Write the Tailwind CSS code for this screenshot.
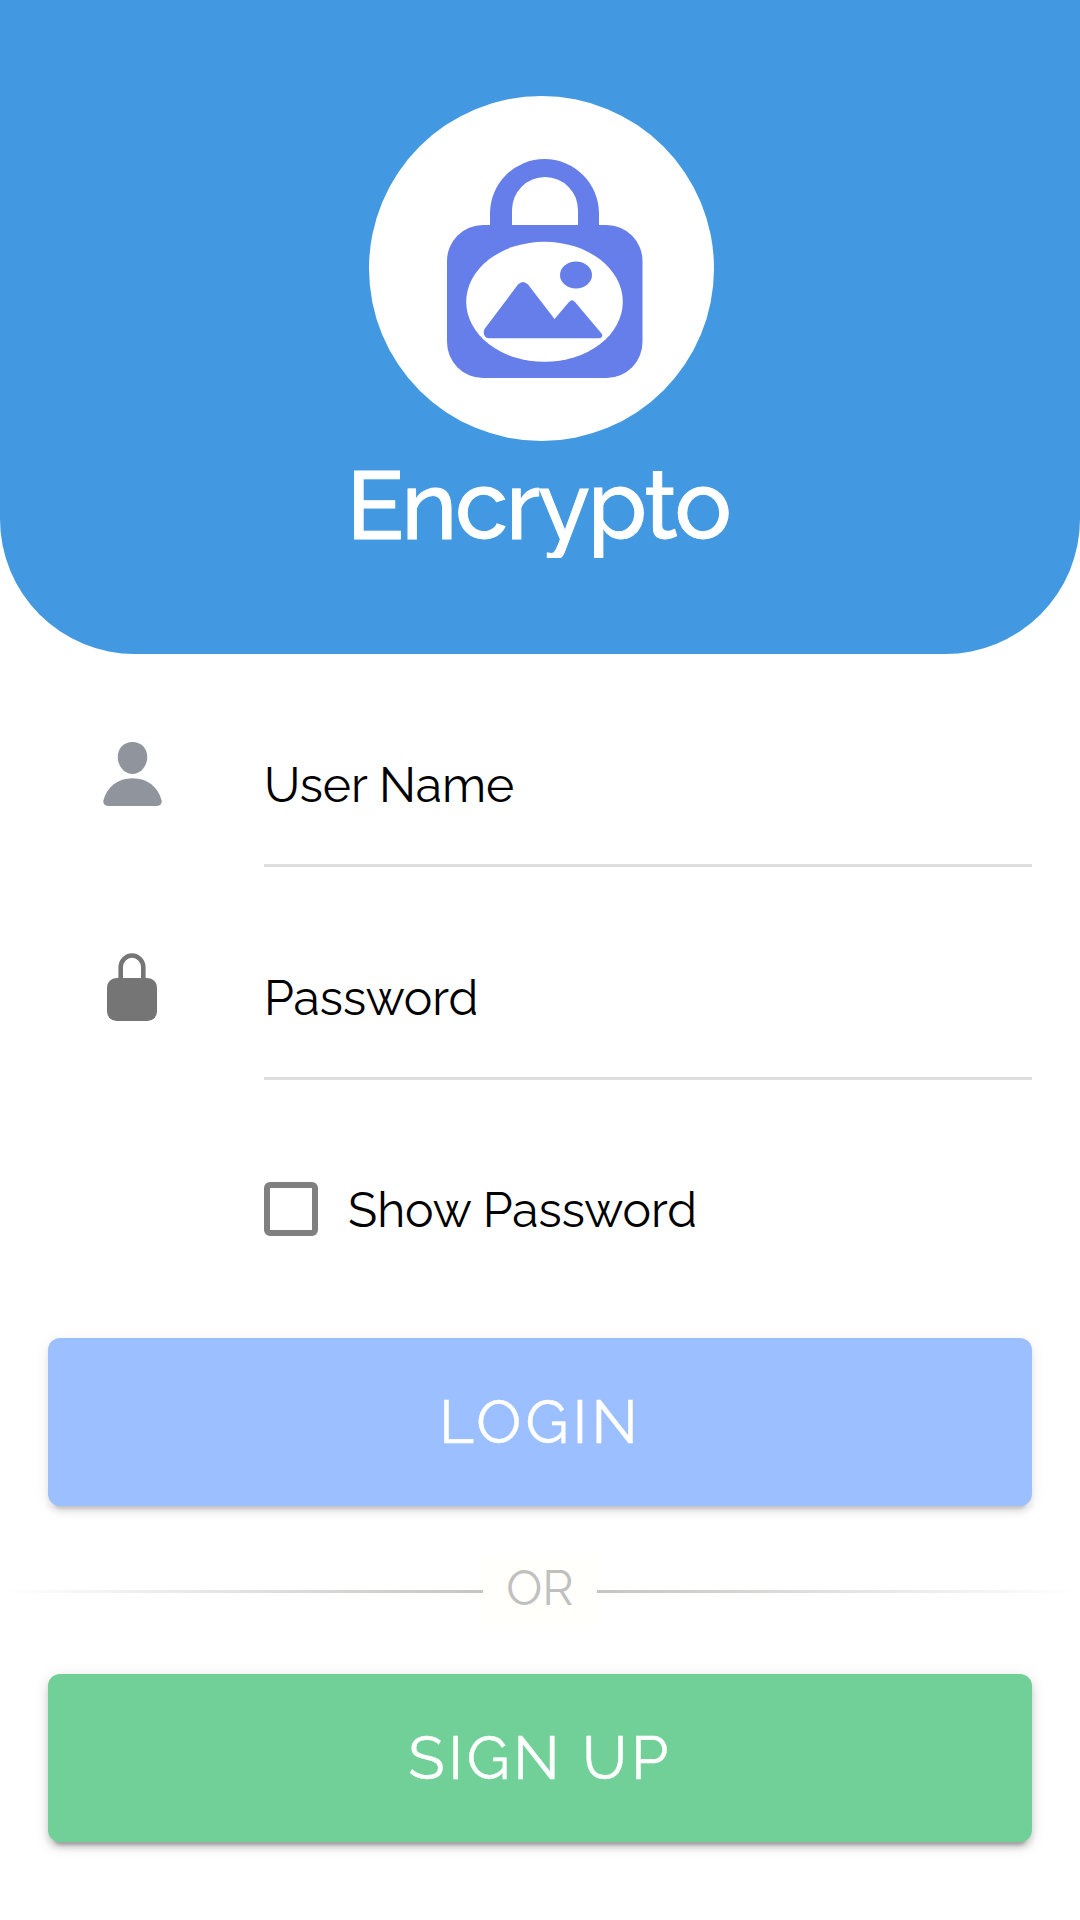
<!DOCTYPE html>
<html lang="en">
<head>
<meta charset="utf-8">
<title>Encrypto</title>
<script src="https://cdn.jsdelivr.net/npm/@tailwindcss/browser@4"></script>
</head>
<body class="bg-white font-[Raleway,Lato,sans-serif] text-black">
<main class="flex h-[1920px] w-[1080px] flex-col overflow-hidden">
  <header class="flex h-[654px] shrink-0 flex-col items-center rounded-b-[135px] bg-[#4299e1] pt-24">
    <svg class="ml-[3px] h-[345px] w-[345px] shrink-0" viewBox="369 96 345 345">
      <circle cx="541.5" cy="268.5" r="172.5" fill="#fff"/>
      <g fill="#667eea">
        <path d="M490 230V213.500A54.500 54.500 0 0 1 599 213.500V230H578V210A33 33 0 0 0 512 210V230Z"/>
        <rect x="447" y="225" width="195.500" height="153" rx="36"/>
      </g>
      <ellipse cx="544.500" cy="301.800" rx="78.300" ry="60" fill="#fff"/>
      <g fill="#667eea">
        <ellipse cx="576" cy="275" rx="16" ry="13.500"/>
        <path d="M484.500 329L518 284.500Q523 279.500 528 284.500L554.500 319L569 302Q572 298.500 575 302L601.500 333.500C603.500 336 601.500 338.300 599 338.300H489C484.500 338.300 482.500 333 484.500 329Z"/>
      </g>
    </svg>
    <h1 class="mt-[9px] mr-[4px] h-[108px] overflow-hidden text-[95px] leading-[112px] font-medium tracking-[-2.1px] text-white [-webkit-text-stroke:0.9px_white]">Encrypto</h1>
  </header>

  <form class="flex flex-col">
    <label class="flex h-[213px] items-start">
      <span class="flex w-[264px] shrink-0 justify-center pt-[88px]">
        <svg class="h-[64px] w-[59px]" viewBox="0 0 60 64" preserveAspectRatio="none" fill="#90959d"><path d="M30 0C39 0 45 6.500 45 15C45 24.500 38 32 30 32S15 24.500 15 15C15 6.500 21 0 30 0Z"/><path d="M30 36.300C45 36.300 56 45 59.600 58.500C60.200 62 58 64 55 64H5C2 64 -.2 62 .4 58.500C4 45 15 36.300 30 36.300Z"/></svg>
      </span>
      <span class="mr-12 h-[213px] grow border-b-[3px] border-[#ddd] pt-[102px] text-[48px] leading-[58px]">User Name</span>
    </label>
    <label class="flex h-[213px] items-start">
      <span class="flex w-[264px] shrink-0 justify-center pt-[86px]">
        <svg class="h-[68px] w-[50px]" viewBox="0 0 50 68"><path d="M13.700 28V14.500A11.300 12 0 0 1 36.300 14.500V28" fill="none" stroke="#757575" stroke-width="4.600"/><rect y="25" width="50" height="43" rx="9.500" fill="#757575"/></svg>
      </span>
      <span class="mr-12 h-[213px] grow border-b-[3px] border-[#ddd] pt-[102px] text-[48px] leading-[58px]">Password</span>
    </label>
    <label class="mt-[102px] ml-[264px] flex h-[54px] items-center">
      <span class="h-[54px] w-[54px] rounded-[6px] border-[6px] border-[#808080]"></span>
      <span class="ml-[30px] pt-[2px] text-[48px] leading-[54px]">Show Password</span>
    </label>
    <button type="button" class="mx-12 mt-[102px] flex h-[168px] items-center justify-center rounded-xl bg-[#9cbfff] pl-[1px] text-[60px] tracking-[4.1px] text-white shadow-[0_9px_3px_-6px_rgba(0,0,0,0.12),0_6px_6px_rgba(0,0,0,0.08),0_3px_15px_rgba(0,0,0,0.08)] [-webkit-text-stroke:0.4px_white]">LOGIN</button>
    <div class="mt-12 flex h-[71px] items-center">
      <span class="mt-[4px] h-[3px] w-[483px] bg-linear-to-r from-transparent from-1% to-[#c4c4c0]"></span>
      <span class="flex h-[71px] w-[114px] items-center justify-center bg-[#fffffc] pb-[4px] text-[48px] text-[#c0c0c0]">OR</span>
      <span class="mt-[4px] h-[3px] w-[483px] bg-linear-to-l from-transparent from-1% to-[#c4c4c0]"></span>
    </div>
    <button type="button" class="mx-12 mt-[49px] flex h-[168px] items-center justify-center rounded-xl bg-[#70d097] text-[60px] tracking-[3.6px] text-white shadow-[0_9px_3px_-6px_rgba(0,0,0,0.2),0_6px_6px_rgba(0,0,0,0.14),0_3px_15px_rgba(0,0,0,0.12)] [-webkit-text-stroke:0.4px_white]">SIGN UP</button>
  </form>
</main>
</body>
</html>
